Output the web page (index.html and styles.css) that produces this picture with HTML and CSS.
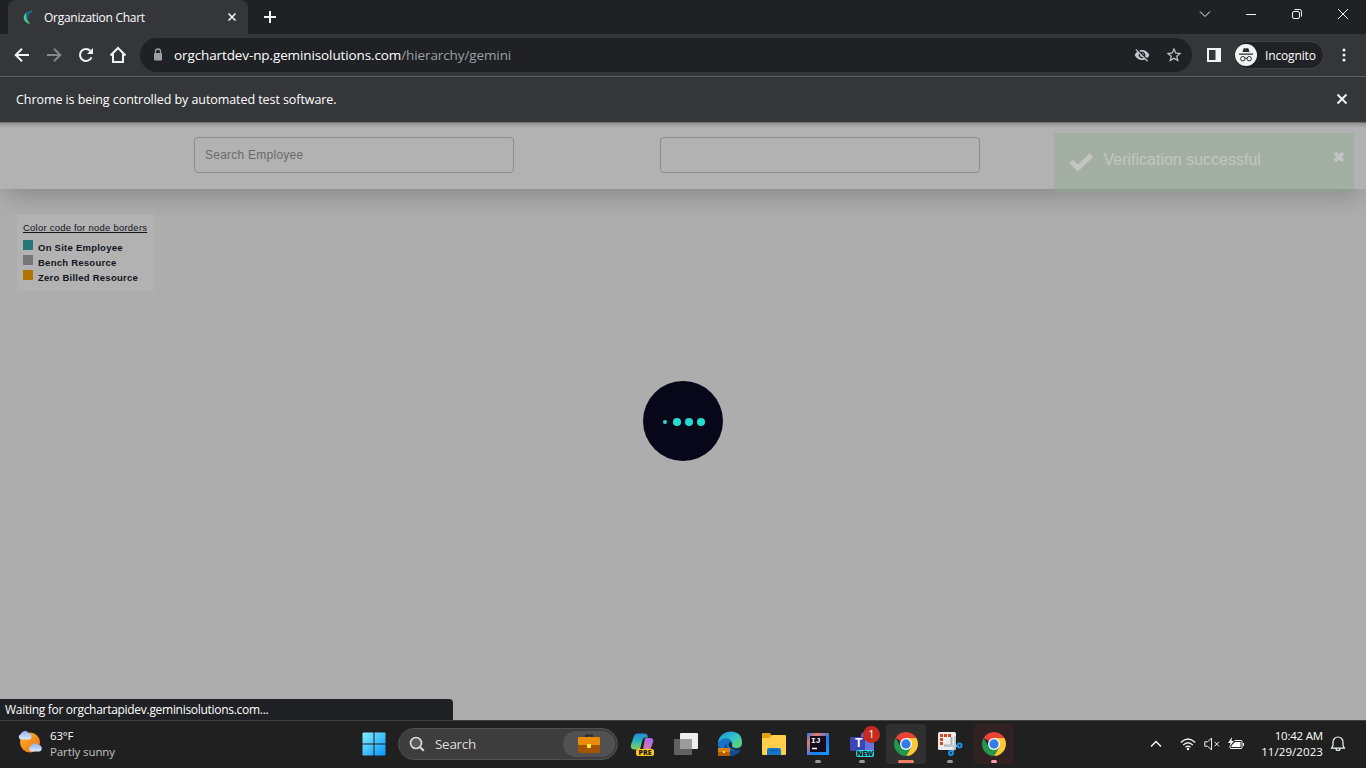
FILE: index.html
```html
<!DOCTYPE html>
<html lang="en">
<head>
<meta charset="utf-8">
<title>Organization Chart</title>
<link rel="stylesheet" href="styles.css">
</head>
<body>
<div class="screen">
  <div class="tabstrip">
    <div class="tab">
      <svg class="favicon" width="12" height="16" viewBox="0 0 12 16"><path d="M4 3C0 6-.5 10 3 13q2 2 4 2Q2 9 4 3z" fill="#43cf91"/><path d="M9 1Q3 3 3 6l1 6Q5 5 9 3z" fill="#176d84"/></svg>
      <span class="tab-title">Organization Chart</span>
      <svg width="10" height="10" viewBox="0 0 10 10" class="line"><path d="M1.500 1.500l7 7m0-7l-7 7" stroke-width="1.600"/></svg>
    </div>
    <svg class="newtab line" width="12" height="12" viewBox="0 0 12 12"><path d="M6 0v12M0 6h12" stroke-width="2"/></svg>
    <div class="window-controls">
      <svg class="line" width="12" height="12" viewBox="0 0 12 12"><path d="M1 3.500l5 5 5-5"/></svg>
      <svg class="line" width="12" height="12" viewBox="0 0 12 12"><path d="M1 6.500h10"/></svg>
      <svg class="line" width="12" height="12" viewBox="0 0 12 12"><rect x="1.500" y="3.500" width="7" height="7" rx="1.500"/><path d="M3.500 1.500h5a2 2 0 0 1 2 2v5"/></svg>
      <svg class="line" width="12" height="12" viewBox="0 0 12 12"><path d="M1 1l10 10M11 1L1 11"/></svg>
    </div>
  </div>

  <div class="toolbar">
    <div class="nav">
      <svg class="line" width="16" height="16" viewBox="0 0 16 16"><path d="M15 8H2M8 1.700L1.700 8 8 14.300" stroke-width="2"/></svg>
      <svg class="line dim" width="16" height="16" viewBox="0 0 16 16"><path d="M1 8h13M8 1.700L14.300 8 8 14.300" stroke-width="2"/></svg>
      <svg class="line" width="16" height="16" viewBox="0 0 16 16"><path d="M13.500 10.300A6 6 0 1 1 12.300 3.700" stroke-width="2"/><path d="M15 1v6H9z" fill="#f1f3f4" stroke="none"/></svg>
      <svg class="line" width="18" height="18" viewBox="0 0 18 18"><path d="M1.500 9.500L9 2l7.500 7.500M4 8v8h10V8" stroke-width="2"/></svg>
    </div>
    <div class="omnibox">
      <svg width="10" height="14" viewBox="0 0 10 14"><rect x="1" y="5" width="8" height="7.500" rx="1" fill="#9aa0a6"/><path d="M2.500 6V3.500a2.500 2.500 0 0 1 5 0V6" fill="none" stroke="#9aa0a6" stroke-width="1.300"/></svg>
      <span class="url">orgchartdev-np.geminisolutions.com<span class="path">/hierarchy/gemini</span></span>
      <svg class="eye" width="16" height="16" viewBox="0 0 24 24"><path fill="#c4c7cb" d="M12 7c2.760 0 5 2.240 5 5 0 .65-.13 1.260-.36 1.830l2.920 2.920c1.510-1.260 2.700-2.890 3.430-4.750-1.730-4.390-6-7.500-11-7.500-1.400 0-2.740.25-3.980.7l2.160 2.160C10.740 7.130 11.350 7 12 7zM2 4.270l2.740 2.740C3.080 8.300 1.780 10.020 1 12c1.730 4.390 6 7.500 11 7.500 1.550 0 3.030-.3 4.380-.84l3.350 3.340L21 20.730 3.270 3 2 4.270zM7.530 9.800l1.550 1.550C9.030 11.560 9 11.780 9 12a3 3 0 0 0 3 3c.22 0 .44-.03.65-.08l1.550 1.550A5 5 0 0 1 7.530 9.800zm4.310-.78l3.150 3.150.02-.16a3 3 0 0 0-3.170-2.990z"/></svg>
      <svg width="18" height="18" viewBox="0 0 24 24"><path fill="#c4c7cb" d="M22 9.240l-7.190-.62L12 2 9.190 8.630 2 9.240l5.460 4.730L5.820 21 12 17.270 18.180 21l-1.630-7.030L22 9.240zM12 15.400l-3.760 2.270 1-4.280-3.320-2.880 4.380-.38L12 6.100l1.710 4.040 4.380.38-3.320 2.880 1 4.280L12 15.400z"/></svg>
    </div>
    <svg class="side-panel" width="14" height="14" viewBox="0 0 14 14"><path fill="#f1f3f4" fill-rule="evenodd" d="M0 0h14v14H0zM2 2v10h6.500V2z"/></svg>
    <div class="profile">
      <svg width="22" height="22" viewBox="0 0 22 22"><circle cx="11" cy="11" r="11" fill="#f1f3f4"/><path d="M7.500 8l1-3.300q.3-.8 1.200-.5l1.300.4 1.300-.4q.9-.3 1.200.5l1 3.300zM4 9.600h14v1.100H4z" fill="#292a2d"/><g fill="none" stroke="#292a2d"><circle cx="7.800" cy="14.700" r="2.200"/><circle cx="14.200" cy="14.700" r="2.200"/><path d="M10 14.400q1-.7 2 0"/></g></svg>
      <span>Incognito</span>
    </div>
    <svg class="kebab" width="4" height="14" viewBox="0 0 4 14" fill="#f1f3f4"><circle cx="2" cy="2" r="1.500"/><circle cx="2" cy="7" r="1.500"/><circle cx="2" cy="12" r="1.500"/></svg>
  </div>

  <div class="infobar">
    <span>Chrome is being controlled by automated test software.</span>
    <svg class="line" width="12" height="12" viewBox="0 0 12 12"><path d="M1.500 1.500l9 9m0-9l-9 9" stroke-width="2"/></svg>
  </div>

  <main class="page">
    <header class="filters">
      <input class="field" placeholder="Search Employee">
      <input class="field">
    </header>
    <section class="legend">
      <div class="legend-title">Color code for node borders</div>
      <div class="legend-row"><i class="swatch onsite"></i><b>On Site Employee</b></div>
      <div class="legend-row"><i class="swatch bench"></i><b>Bench Resource</b></div>
      <div class="legend-row"><i class="swatch zero"></i><b>Zero Billed Resource</b></div>
    </section>
    <div class="toast">
      <svg width="26" height="20" viewBox="0 0 26 20"><path d="M3 9.500l7 6.500L23.500 3" fill="none" stroke="#c3c5c3" stroke-width="5"/></svg>
      <span>Verification successful</span>
      <svg class="toast-close" width="12" height="12" viewBox="0 0 12 12"><path d="M2 2l8 8m0-8l-8 8" stroke="#c3c5c3" stroke-width="3.600"/></svg>
    </div>
    <div class="loader"><i class="dot small"></i><i class="dot medium"></i><i class="dot"></i><i class="dot"></i></div>
    <div class="status">Waiting for orgchartapidev.geminisolutions.com...</div>
  </main>

  <footer class="taskbar">
    <div class="weather">
      <svg width="26" height="26" viewBox="0 0 26 26"><defs><linearGradient id="sun" x1="0" y1="0" x2="1" y2="1"><stop stop-color="#f9b62b"/><stop offset="1" stop-color="#ee6d12"/></linearGradient><linearGradient id="cloud" x1="0" y1="0" x2="0" y2="1"><stop stop-color="#8db1ee"/><stop offset="1" stop-color="#dbe8fb"/></linearGradient></defs><circle cx="13" cy="13.500" r="10" fill="url(#sun)"/><path d="M3.500 10.500a3 3 0 0 1 .3-5.500 4.300 4.300 0 0 1 8-.7 3.200 3.200 0 0 1 .7 6.200z" fill="url(#cloud)"/><path d="M14 22.500a2.800 2.800 0 0 1 0-5.400 4.300 4.300 0 0 1 7.500-1.200 3.400 3.400 0 0 1 1 6.600z" fill="url(#cloud)"/></svg>
      <div class="weather-text"><span>63°F</span><span class="muted">Partly sunny</span></div>
    </div>
    <div class="dock">
      <svg class="start" width="24" height="24" viewBox="0 0 24 24"><defs><linearGradient id="win" x1="0" y1="0" x2="1" y2="1"><stop stop-color="#80f0ff"/><stop offset="1" stop-color="#0892f8"/></linearGradient></defs><path d="M1.500.5h10v11H.5v-10q0-1 1-1zM12.500.5h10q1 0 1 1v10h-11zM.5 12.500h11v11h-10q-1 0-1-1zM12.500 12.500h11v10q0 1-1 1h-10z" fill="url(#win)"/></svg>
      <div class="search">
        <svg width="16" height="16" viewBox="0 0 16 16"><circle cx="7" cy="7" r="5.500" fill="#5a5a5a" stroke="#dedede" stroke-width="1.600"/><path d="M11 11l3.800 3.800" stroke="#dedede" stroke-width="2"/></svg>
        <span>Search</span>
        <div class="search-badge"><svg width="22" height="20" viewBox="0 0 22 20"><path d="M8 4V1.500h6V4" fill="none" stroke="#302b25" stroke-width="2"/><rect y="3" width="22" height="16" rx="1" fill="#a35403"/><path d="M1 3h20q1 0 1 1v7H0V4q0-1 1-1z" fill="#e98b08"/><rect x="9" y="10" width="4" height="4" fill="#ffe53a"/></svg></div>
      </div>
      <div class="apps">
        <div class="app"><svg width="24" height="24" viewBox="0 0 24 24"><defs><linearGradient id="co1" x1="0" y1="0" x2="0" y2="1"><stop stop-color="#2689d8"/><stop offset=".5" stop-color="#28b7b4"/><stop offset="1" stop-color="#96cd55"/></linearGradient><linearGradient id="co2" x1="0" y1="0" x2="0" y2="1"><stop stop-color="#a46bf0"/><stop offset="1" stop-color="#f27a91"/></linearGradient></defs><path d="M7 1.500h8q2.500 0 3 4h-3q-2 0-3 4l-2 8H4Q0 17 1 12.500L4 4q1-2.500 3-2.500z" fill="url(#co1)"/><path d="M15 6h5q4 0 3 4l-3 9q-1 3-3 3h-6l2-4 2-12z" fill="url(#co2)"/></svg><span class="pre">PRE</span></div>
        <div class="app"><svg width="26" height="24" viewBox="0 0 26 24"><rect x="7" y="1" width="18" height="16" rx="1" fill="#eee"/><rect x="1" y="7" width="18" height="16" rx="1" fill="#616161"/><path d="M7 7h12v10H7z" fill="#9c9c9c"/></svg></div>
        <div class="app"><svg width="26" height="26" viewBox="0 0 26 26"><defs><linearGradient id="edge" x1="0" y1="0" x2="1" y2="1"><stop stop-color="#168ed8"/><stop offset=".5" stop-color="#33c3cc"/><stop offset="1" stop-color="#6bdb4d"/></linearGradient></defs><circle cx="13" cy="13" r="12" fill="#1672c7"/><path d="M1 12C3-3 25-3 25 11c0 5-5 7-9 5-2-1 0-2-1-5C13 6 5 6 1 12z" fill="url(#edge)"/><path d="M10 12c-2 6 4 10 13 7-2 4-6 6-10 6-6-1-8-9-3-13z" fill="#114b8f"/><path d="M14 11c2 2 0 4 1 5 3 3 7 2 10-1v3c-4 2-8 2-11-1-3-2-3-5 0-6z" fill="#202020"/><path d="M1 17h12v8H1z" fill="#b65e05"/><path d="M1 17h12v4H1z" fill="#dd8011"/><path d="M6 20h2v2H6z" fill="#ffe53a"/></svg></div>
        <div class="app"><svg width="26" height="24" viewBox="0 0 26 24"><path d="M1 2q0-1 1-1h7l2 3-2 3H1z" fill="#e3a20d"/><path d="M11 3h13q1 0 1 1v18q0 1-1 1H2q-1 0-1-1V6h7z" fill="#ffcf4b"/><path d="M6 23v-5q0-2 2-2h10q2 0 2 2v5z" fill="#1676c9"/><path d="M9 18.500h8" stroke="#0757a0"/></svg></div>
        <div class="app"><svg width="24" height="24" viewBox="0 0 24 24"><defs><linearGradient id="ij" x1="0" y1="0" x2="1" y2="1"><stop stop-color="#2672f5"/><stop offset=".25" stop-color="#ee7a69"/><stop offset=".6" stop-color="#197cf5"/><stop offset="1" stop-color="#159cff"/></linearGradient></defs><path d="M1 1h22v22H1z" fill="url(#ij)"/><path d="M4 4h16v16H4z" fill="#15091d"/><path d="M6 16.500h5" stroke="#fff" stroke-width="1.500"/></svg><span class="ij">IJ</span><i class="running"></i></div>
        <div class="app"><svg width="26" height="26" viewBox="0 0 26 26"><circle cx="16" cy="5" r="4" fill="#6165c7"/><rect x="11" y="9" width="14" height="13" rx="4" fill="#6971d8"/><rect x="1" y="6" width="15" height="14" rx="1" fill="#3c45b5"/></svg><span class="teams">T</span><span class="new">NEW</span><span class="count">1</span><i class="running"></i></div>
        <div class="app active"><svg width="24" height="24" viewBox="0 0 24 24"><path d="M12 12L1.610 6A12 12 0 0 1 22.390 6z" fill="#e84436"/><path d="M22.390 6A12 12 0 0 1 12 24l5.200-9L12 6z" fill="#fcc934"/><path d="M1.610 6A12 12 0 0 0 12 24l5.200-9-10.400 0z" fill="#23984c"/><circle cx="12" cy="12" r="6" fill="#fff"/><circle cx="12" cy="12" r="4.700" fill="#347de9"/></svg><i class="running wide"></i></div>
        <div class="app"><svg width="26" height="26" viewBox="0 0 26 26"><rect x="1" y="1" width="18" height="18" rx="1.500" fill="#eeeded"/><path d="M4.500 14V4.500H14" fill="none" stroke="#d64420" stroke-width="3" stroke-dasharray="3 1"/><path d="M7 14.500h7.500V6" fill="none" stroke="#aeb2b5" stroke-width="2"/><path d="M18 5v12l-3 3M10 15h11" fill="none" stroke="#b9c8d1" stroke-width="2"/><circle cx="14" cy="22" r="2" fill="none" stroke="#1691e4" stroke-width="2"/><circle cx="22.500" cy="14.500" r="2" fill="none" stroke="#1691e4" stroke-width="2"/></svg><i class="running"></i></div>
        <div class="app alert"><svg width="24" height="24" viewBox="0 0 24 24"><path d="M12 12L1.610 6A12 12 0 0 1 22.390 6z" fill="#e84436"/><path d="M22.390 6A12 12 0 0 1 12 24l5.200-9L12 6z" fill="#fcc934"/><path d="M1.610 6A12 12 0 0 0 12 24l5.200-9-10.400 0z" fill="#23984c"/><circle cx="12" cy="12" r="6" fill="#fff"/><circle cx="12" cy="12" r="4.700" fill="#347de9"/></svg><i class="running pink"></i></div>
      </div>
    </div>
    <div class="tray">
      <svg class="line" width="12" height="12" viewBox="0 0 12 12"><path d="M1 8.500l5-5 5 5" stroke-width="1.500"/></svg>
      <svg class="line wifi" width="16" height="14" viewBox="0 0 16 14"><path d="M.8 5.500q7.200-7 14.400 0M3.200 8q4.800-4.600 9.600 0M5.500 10.300q2.500-2.300 5 0" stroke-width="1.300"/><circle cx="8" cy="12" r="1.200" fill="#fff" stroke="none"/></svg>
      <svg class="line volume" width="16" height="14" viewBox="0 0 16 14"><path d="M.8 4.800h2.700l4-3.600v11.600l-4-3.600H.8zM10.500 4.800l4.500 4.500m0-4.500l-4.500 4.500"/></svg>
      <svg class="line battery" width="17" height="14" viewBox="0 0 17 14"><path d="M6.500 3.500H13q1 0 1 1v6q0 1-1 1H3q-1 0-1-1V9M15.500 6v3"/><path d="M7 5h5.500v5h-9V8.500zM4 0L0 6h2.500L1.500 9.500 6 4H3.500z" fill="#fff" stroke="none"/></svg>
      <div class="clock"><span>10:42 AM</span><span class="date">11/29/2023</span></div>
      <svg class="line bell" width="16" height="16" viewBox="0 0 16 16"><path d="M1.500 12.200L3 9.500V6a5 5 0 0 1 10 0v3.500l1.500 2.700zM6 12.500a2 2 0 0 0 4 0" stroke-width="1.200"/></svg>
    </div>
  </footer>
</div>
</body>
</html>
```

FILE: styles.css
```css
* { box-sizing: border-box; }
body { margin: 0; font-family: "Open Sans", "Noto Sans", sans-serif; color: #fff; overflow: hidden; }
svg { display: block; flex: none; }
.line { fill: none; stroke: #f1f3f4; }
.dim { stroke: #85878a; }
.screen { width: 1366px; height: 768px; display: flex; flex-direction: column; }

.tabstrip { height: 34px; background: #202124; display: flex; align-items: center; padding-left: 8px; flex: none; }
.tab { width: 240px; height: 34px; border-radius: 8px 8px 0 0; background: #35363a; display: flex; align-items: center; padding: 0 11px 0 15px; }
.favicon { margin-right: 9px; }
.tab-title { flex: 1; font-size: 12px; letter-spacing: -.28px; }
.newtab { margin-left: 16px; }
.window-controls { margin: 0 17px 6px auto; display: flex; gap: 34px; }

.toolbar { height: 43px; background: #35363a; border-bottom: 1px solid #5f6164; display: flex; align-items: center; padding-left: 14px; flex: none; }
.nav { width: 126px; display: flex; gap: 16px; align-items: center; }
.nav svg:last-child { margin-left: -1px; }
.omnibox { width: 1052px; height: 34px; border-radius: 17px; background: #202124; display: flex; align-items: center; padding: 0 9px 0 13px; }
.url { margin-left: 11px; font-size: 13.500px; letter-spacing: -.11px; }
.path { color: #9aa0a6; }
.eye { margin: 0 15px 0 auto; }
.side-panel { margin: 0 12px 0 15px; }
.profile { width: 91px; height: 28px; border: 1px solid #414246; border-radius: 14px; background: #202124; display: flex; align-items: center; gap: 8px; padding-left: 1px; font-size: 12px; letter-spacing: -.15px; }
.kebab { margin-left: 18px; }

.infobar { height: 45px; background: #35363a; display: flex; align-items: center; justify-content: space-between; padding: 0 18px 1px 16px; font-size: 12.500px; letter-spacing: -.07px; flex: none; }

.page { height: 598px; position: relative; background: #adadad; font-family: "Liberation Sans", Arial, sans-serif; border-top: 1px solid #74736f; flex: none; overflow: hidden; }
.filters { height: 66px; display: flex; gap: 146px; padding: 14px 0 0 194px; background: linear-gradient(#929290, #b2b2b2 5px); box-shadow: 0 12px 24px -6px rgba(0,0,0,.22); }
.field { width: 320px; height: 36px; border: 1px solid #8c8c8c; border-radius: 4px; background: transparent; padding: 0 10px; font: 12px "Liberation Sans", Arial, sans-serif; letter-spacing: .25px; }
.field::placeholder { color: #6a6a6a; opacity: 1; }
.legend { width: 137px; height: 77px; margin: 25px 0 0 17px; padding: 6px; background: #b2b2b2; color: #12131d; font-size: 9.500px; position: relative; }
.legend-title { height: 18px; line-height: 16px; text-decoration: underline; letter-spacing: .22px; white-space: nowrap; }
.legend-row { height: 15px; display: flex; gap: 5px; line-height: 20px; white-space: nowrap; }
.legend-row b { font-size: 9.500px; letter-spacing: .25px; }
.swatch { width: 10px; height: 10px; margin-top: 2px; }
.onsite { background: #267778; }
.bench { background: #777; }
.zero { background: #b27300; }
.toast { position: absolute; left: 1054px; top: 10px; width: 300px; height: 60px; border-radius: 2px; background: rgba(139,171,139,.4); display: flex; padding: 19px 9px 0 14px; color: #c3c5c3; font-size: 16px; line-height: 16px; }
.toast span { margin-left: 9.500px; }
.toast-close { margin: -1px 0 0 auto; }
.loader { position: absolute; left: 643px; top: 258px; width: 80px; height: 80px; border-radius: 50%; background: #080619; display: flex; align-items: center; gap: 4px; padding: 2px 0 0 20px; }
.dot { width: 8px; height: 8px; border-radius: 50%; background: #26dad2; }
.small { width: 4px; height: 4px; margin-right: 2px; }
.medium { width: 7.500px; height: 7.500px; }
.status { position: absolute; left: 0; bottom: 0; width: 453px; height: 21px; border-radius: 0 4px 0 0; background: #202124; padding-left: 5px; font: 12px/21px "Open Sans", sans-serif; letter-spacing: -.29px; }

.taskbar { height: 48px; background: #202020; border-top: 1px solid #414141; display: flex; flex: none; }
.weather { width: 361px; display: flex; padding: 8px 0 0 17px; gap: 7px; }
.weather-text, .clock { display: flex; flex-direction: column; font-size: 11.500px; line-height: 16px; letter-spacing: -.2px; }
.weather-text { margin-top: -1px; }
.muted { color: #c2c2c2; letter-spacing: -.1px; }
.dock { width: 655px; display: flex; align-items: center; padding-bottom: 1px; }
.start { margin: 0 12px 0 1px; }
.search { width: 220px; height: 32px; border: 1px solid #505050; border-radius: 16px; background: #3d3d3d; display: flex; align-items: center; padding: 0 2px 0 10px; gap: 10px; font-size: 13.500px; letter-spacing: -.3px; color: #ddd; }
.search-badge { width: 52px; height: 26px; border-radius: 13px; background: #515151; margin-left: auto; display: grid; place-items: center; }
.apps { display: flex; gap: 4px; margin-left: 4px; }
.app { width: 40px; height: 40px; border-radius: 4px; position: relative; display: grid; place-items: center; }
.active { background: #303030; }
.alert { background: #302222; }
.running { position: absolute; left: 17px; bottom: 1px; width: 6px; height: 3px; border-radius: 2px; background: #999; }
.wide { left: 12px; width: 16px; background: #f08268; }
.pink { background: #ff9dad; }
.pre, .new { position: absolute; font-size: 7px; line-height: 7px; font-weight: 800; color: #151515; text-align: center; border-radius: 2px; }
.pre { left: 14px; top: 25px; width: 18px; background: #ffcc16; }
.new { left: 14px; top: 26px; width: 18px; background: #25e2e8; letter-spacing: -.2px; }
.ij { position: absolute; left: 13px; top: 13px; font: bold 8px/8px "Liberation Mono", monospace; }
.teams { position: absolute; left: 13px; top: 13px; font: bold 12px/13px Roboto, sans-serif; }
.count { position: absolute; left: 21px; top: 2px; width: 17px; height: 17px; border-radius: 50%; background: #c92a20; font-size: 11px; line-height: 16px; text-align: center; }
.tray { flex: 1; display: flex; align-items: center; justify-content: flex-end; padding: 0 20px 1px 0; }
.wifi { margin-left: 18px; }
.volume { margin-left: 8px; }
.battery { margin-left: 8px; }
.clock { width: 78px; text-align: right; margin-right: 7px; }
.date { letter-spacing: .08px; }
```
